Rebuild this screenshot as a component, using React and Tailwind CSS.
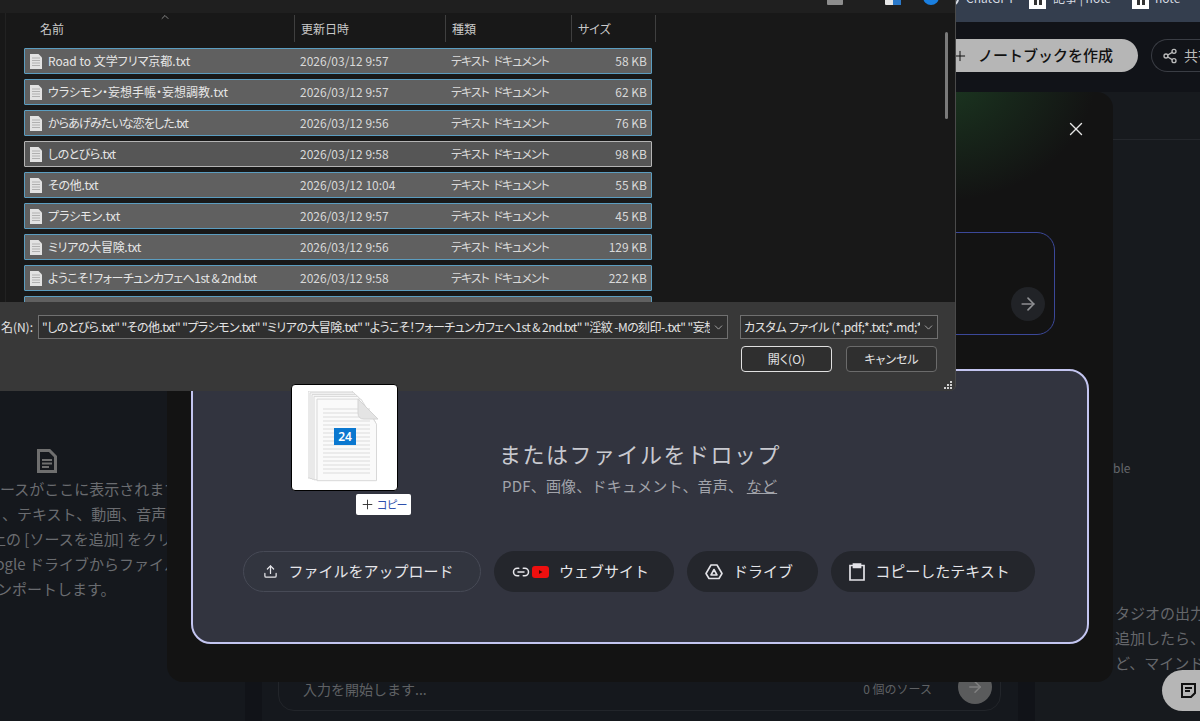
import { ArrowRight, ChevronDown, ChevronUp, Link2, Plus, Share2, Upload, X } from 'lucide-react';

const files = [
  { name: 'Road to 文学フリマ京都.txt', date: '2026/03/12 9:57', size: '58 KB' },
  { name: 'ウラシモン・妄想手帳・妄想調教.txt', date: '2026/03/12 9:57', size: '62 KB' },
  { name: 'からあげみたいな恋をした.txt', date: '2026/03/12 9:56', size: '76 KB', nameClass: 'tracking-[-0.9px]' },
  { name: 'しのとびら.txt', date: '2026/03/12 9:58', size: '98 KB', focused: true, nameClass: 'tracking-[-0.5px]' },
  { name: 'その他.txt', date: '2026/03/12 10:04', size: '55 KB', nameClass: 'tracking-[-0.3px]' },
  { name: 'プラシモン.txt', date: '2026/03/12 9:57', size: '45 KB' },
  { name: 'ミリアの大冒険.txt', date: '2026/03/12 9:56', size: '129 KB', nameClass: 'tracking-[-0.3px]' },
  { name: 'ようこそ！フォーチュンカフェへ1st & 2nd.txt', date: '2026/03/12 9:58', size: '222 KB', nameClass: 'tracking-[-0.5px]' },
  { name: '淫紋 -Mの刻印-.txt', date: '2026/03/12 9:57', size: '84 KB' },
];

function TxtIcon() {
  return (
    <svg width="12" height="15" viewBox="0 0 12 15" className="shrink-0">
      <path d="M0 0h8.5L12 3.500V15H0z" fill="#e2e2e2" />
      <path d="M2 4h8M2 6.500h8M2 9h8M2 11.500h8" stroke="#b0b0b0" strokeWidth="1" />
    </svg>
  );
}

function FileRow({ file }) {
  return (
    <div
      className={`flex items-center h-[26px] shrink-0 border rounded-[1px] text-[12px] text-[#d9d9d9] ${
        file.focused ? 'bg-[#565656] border-[#b4b4b4]' : 'bg-[#606060] border-[#5b9dc0]'
      }`}
    >
      <div className="w-[270px] flex items-center gap-[6px] pl-[5px] whitespace-nowrap text-[#e6e6e6]">
        <TxtIcon />
        <span className={file.nameClass}>{file.name}</span>
      </div>
      <div className="w-[151px] pl-[5px]">{file.date}</div>
      <div className="w-[120px] pl-[5px] whitespace-nowrap tracking-[-1px] [word-spacing:3px]">テキスト ドキュメント</div>
      <div className="flex-1 text-right pr-[4px]">{file.size}</div>
    </div>
  );
}

function ColumnHead({ label, className }) {
  return (
    <div className={`h-[27px] flex items-center border-r border-[#3f3f3f] pl-[6px] ${className}`}>{label}</div>
  );
}

function FileDialog() {
  return (
    <div className="absolute left-0 top-0 w-[956px] h-[391px] flex flex-col overflow-hidden border-r border-[#4a4a4a] rounded-br-[6px] [font-feature-settings:'palt']">
      <div className="h-[13px] shrink-0 bg-[#1f1f1f] relative overflow-hidden">
        <div className="absolute left-[827px] top-[-8px] w-[16px] h-[13px] bg-[#8d8d8d] rounded-[1px]" />
        <div className="absolute left-[885px] top-[-8px] w-[16px] h-[13px] bg-[#e6e6e6] rounded-[1px]">
          <div className="ml-auto w-[8px] h-[13px] bg-[#2a78c8]" />
        </div>
        <div className="absolute left-[923px] top-[-11px] w-[16px] h-[16px] rounded-full bg-[#1a7fe0]" />
      </div>
      <div className="flex-1 min-h-0 bg-[#181818] relative pl-[5px] overflow-hidden">
        <div className="border-l border-[#222] pl-[18px] h-full w-[650px] flex flex-col">
          <div className="relative h-[35px] shrink-0 flex items-start text-[12px] text-[#c9c9c9] pt-[2px] w-[632px]">
            <ChevronUp size={12} strokeWidth={1.5} className="absolute left-[135px] top-[-2px] text-[#aaa]" />
            <ColumnHead label="名前" className="w-[271px] pl-[16px]" />
            <ColumnHead label="更新日時" className="w-[151px]" />
            <ColumnHead label="種類" className="w-[126px]" />
            <ColumnHead label="サイズ" className="w-[84px]" />
          </div>
          <div className="flex flex-col gap-[5px] w-[628px]">
            {files.map((f) => (
              <FileRow key={f.name} file={f} />
            ))}
          </div>
        </div>
        <div className="absolute right-[7px] top-[19px] w-[3px] h-[87px] rounded-full bg-[#7a7a7a]" />
      </div>
      <div className="h-[89px] shrink-0 bg-[#383838] relative pt-[13px] text-[12px] text-[#e3e3e3]">
        <div className="flex items-center h-[24px]">
          <div className="w-[38px] shrink-0 overflow-hidden flex justify-end pr-[5px] whitespace-nowrap">名(N):</div>
          <div className="w-[690px] h-[24px] shrink-0 border border-[#707070] bg-[#2f2f2f] flex items-center pl-[3px] overflow-hidden">
            <span className="flex-1 whitespace-nowrap overflow-hidden tracking-[-0.55px]">
              "しのとびら.txt" "その他.txt" "プラシモン.txt" "ミリアの大冒険.txt" "ようこそ！フォーチュンカフェへ1st & 2nd.txt" "淫紋 -Mの刻印-.txt" "妄想手帳.txt"
            </span>
            <ChevronDown size={13} strokeWidth={1.5} className="shrink-0 mx-[2px] text-[#bbb]" />
          </div>
          <div className="w-[198px] h-[24px] ml-[12px] shrink-0 border border-[#707070] bg-[#2f2f2f] flex items-center pl-[3px] overflow-hidden">
            <span className="flex-1 whitespace-nowrap overflow-hidden tracking-[-0.3px]">カスタム ファイル (*.pdf;*.txt;*.md;*.</span>
            <ChevronDown size={13} strokeWidth={1.5} className="shrink-0 mx-[2px] text-[#bbb]" />
          </div>
        </div>
        <div className="flex justify-end gap-[14px] pr-[18px] mt-[7px]">
          <button className="w-[91px] h-[26px] rounded-[4px] border border-[#e0e0e0] bg-[#2f2f2f]">開く(O)</button>
          <button className="w-[91px] h-[26px] rounded-[4px] border border-[#6b6b6b] bg-[#2f2f2f]">キャンセル</button>
        </div>
        <svg width="9" height="9" viewBox="0 0 9 9" className="absolute right-[3px] bottom-[1px]">
          <path d="M7 0h2v2H7zM4 3h2v2H4zM7 3h2v2H7zM1 6h2v2H1zM4 6h2v2H4zM7 6h2v2H7z" fill="#d0d0d0" />
        </svg>
      </div>
    </div>
  );
}

function DragGhost() {
  return (
    <div className="absolute left-[291px] top-[384px] w-[107px] h-[107px] bg-white rounded-[4px] border border-black">
      <svg width="72" height="94" viewBox="0 0 72 94" className="absolute left-[16px] top-[6px]">
        {[0, 2, 4, 6, 9].map((o) => (
          <path
            key={o}
            d={`M${o} ${o * 0.9}h44l${20 - o * 0.5} 25v${62 - o * 0.6}h-${64 - o * 0.5}z`}
            fill="#fafafa"
            stroke="#d8d8d8"
            strokeWidth="1"
          />
        ))}
        {[18, 22, 26, 30, 34, 38, 42, 46, 50, 54, 58, 62, 66, 70, 74, 78, 82].map((y) => (
          <path key={y} d={`M15 ${y}h47`} stroke="#e6e6e6" strokeWidth="1.5" />
        ))}
        <path d="M50 8l20 20h-14q-6 0-6-6z" fill="#e4e4e4" stroke="#d4d4d4" />
      </svg>
      <div className="absolute left-[42px] top-[43px] w-[22px] h-[17px] bg-[#0b78d0] text-white text-[12px] font-semibold flex items-center justify-center font-['Noto_Sans']">
        24
      </div>
      <div className="absolute left-[64px] top-[109px] w-[55px] h-[21px] bg-white rounded-[2px] flex items-center justify-center gap-[2px] text-[11px] tracking-[-0.5px] text-[#2f50ac] whitespace-nowrap [font-feature-settings:'palt']">
        <Plus size={15} strokeWidth={1.5} className="text-[#333]" />
        コピー
      </div>
    </div>
  );
}

function DriveIcon() {
  return (
    <svg width="18" height="18" viewBox="0 0 18 18" fill="none" stroke="#e3e3e8" strokeWidth="1.6" strokeLinejoin="round">
      <path d="M6 2h6l5 8.500-3 5H4l-3-5z" />
      <path d="M9 6.500l3 5.500H6z" />
    </svg>
  );
}

function PasteIcon() {
  return (
    <svg width="16" height="18" viewBox="0 0 16 18" fill="none" stroke="#e3e3e8" strokeWidth="1.7">
      <path d="M4.500 2.500H1v14.500h14V2.500h-3.500" />
      <path d="M4.500 1h7v3.500h-7z" fill="#e3e3e8" />
    </svg>
  );
}

function Pill({ children, outlined, className }) {
  return (
    <button
      className={`h-[41px] rounded-full flex items-center justify-center gap-[10px] pr-[7px] text-[15px] font-normal text-[#e6e6ea] whitespace-nowrap ${
        outlined ? 'border border-[#474a56] bg-[#32353f]' : 'bg-[#24262c]'
      } ${className}`}
    >
      {children}
    </button>
  );
}

function DropZone() {
  return (
    <div className="mx-[24px] h-[275px] rounded-[20px] border-2 border-[#c3c5f0] bg-[#32343f] flex flex-col pl-[50px] pt-[66px]">
      <div className="pl-[256px] text-[22px] leading-[32px] text-[#c9cad0] tracking-[1.5px] whitespace-nowrap">またはファイルをドロップ</div>
      <div className="pl-[259px] mt-[6px] text-[15px] leading-[22px] tracking-[0.2px] text-[#a2a4ab] whitespace-nowrap">
        PDF、画像、ドキュメント、音声、 <span className="underline">など</span>
      </div>
      <div className="flex gap-[13px] mt-[54px]">
        <Pill outlined className="w-[238px]">
          <Upload size={15} strokeWidth={2} />
          ファイルをアップロード
        </Pill>
        <Pill className="w-[180px]">
          <span className="flex items-center gap-[2px]">
            <Link2 size={18} strokeWidth={2} />
            <svg width="17" height="12" viewBox="0 0 17 12">
              <rect width="17" height="12" rx="3" fill="#ee0f0f" />
              <path d="M7 4l3.500 2L7 8z" fill="#3a0a0a" />
            </svg>
          </span>
          ウェブサイト
        </Pill>
        <Pill className="w-[131px]">
          <DriveIcon />
          ドライブ
        </Pill>
        <Pill className="w-[204px]">
          <PasteIcon />
          コピーしたテキスト
        </Pill>
      </div>
    </div>
  );
}

function UploadModal() {
  return (
    <div className="absolute left-[167px] top-[92px] w-[946px] h-[590px] rounded-[16px] bg-[#131313] bg-[radial-gradient(ellipse_160px_130px_at_770px_-20px,#1c3a22_0%,#17261a_50%,transparent_100%)] flex flex-col">
      <div className="flex justify-end pt-[26px] pr-[26px] h-[140px] text-[#e6e6e6]">
        <X size={22} strokeWidth={1.5} />
      </div>
      <div className="ml-[100px] mr-[58px] h-[103px] rounded-[18px] border border-[#3b4899] relative">
        <div className="absolute right-[9px] bottom-[13px] w-[34px] h-[34px] rounded-full bg-[#212327] flex items-center justify-center text-[#8e8f92]">
          <ArrowRight size={20} strokeWidth={2} />
        </div>
      </div>
      <div className="h-[34px]" />
      <DropZone />
    </div>
  );
}

function NoteMark() {
  return (
    <div className="w-[17px] h-[17px] bg-white flex justify-center gap-[2px] pt-[8px]">
      <div className="w-[3px] h-[5px] bg-[#333]" />
      <div className="w-[3px] h-[5px] bg-[#333]" />
    </div>
  );
}

function Background() {
  return (
    <div className="absolute inset-0 flex flex-col bg-[#111318]">
      <div className="h-[22px] shrink-0 bg-[#343e4e] relative overflow-hidden text-[12px] text-[#d6dbe2]">
        <div className="absolute left-[945px] top-[-8px] w-[14px] h-[14px] rounded-full border-2 border-[#d6dbe2]" />
        <span className="absolute left-[966px] top-[-11px]">ChatGPT</span>
        <div className="absolute left-[1029px] top-[-8px]">
          <NoteMark />
        </div>
        <span className="absolute left-[1053px] top-[-11px] whitespace-nowrap">記事 | note</span>
        <div className="absolute left-[1132px] top-[-8px]">
          <NoteMark />
        </div>
        <span className="absolute left-[1155px] top-[-11px]">note</span>
      </div>
      <div className="h-[70px] shrink-0 flex items-start pt-[17px] justify-end gap-[13px] overflow-hidden">
        <div className="w-[200px] h-[33px] rounded-full bg-[#b6b6b6] flex items-center pl-[14px] gap-[10px] text-[15px] font-medium text-[#111] whitespace-nowrap">
          <Plus size={16} strokeWidth={1.5} />
          ノートブックを作成
        </div>
        <div className="w-[49px] h-[33px] rounded-l-full border border-r-0 border-[#3a3d44] flex items-center pl-[10px] gap-[6px] text-[14px] text-[#bbb] whitespace-nowrap overflow-hidden">
          <Share2 size={16} className="shrink-0" />
          共有
        </div>
      </div>
      <div className="flex-1 flex gap-[17px] min-h-0">
        <div className="w-[245px] shrink-0 bg-[#15181d] relative text-[15px] leading-[25px] text-[#6a6c70] overflow-hidden whitespace-nowrap">
          <svg width="20" height="24" viewBox="0 0 20 24" className="absolute left-[37px] top-[357px]">
            <path d="M1.500 1.500h11l6 6v15h-17z" fill="none" stroke="#6f6f6f" strokeWidth="3" />
            <path d="M5 11h10M5 14.500h10M5 18h7" stroke="#6f6f6f" strokeWidth="2" />
          </svg>
          <div className="absolute left-0 top-[384px]">
            <div className="ml-[-75px]">保存したソースがここに表示されます</div>
            <div className="ml-[2px]">、テキスト、動画、音声ファイル</div>
            <div className="ml-[-9px]">上の [ソースを追加] をクリックするか</div>
            <div className="ml-[-24px]">Google ドライブからファイルを</div>
            <div className="ml-[-3px]">ンポートします。</div>
          </div>
        </div>
        <div className="w-[756px] shrink-0 bg-[#15181d] relative">
          <div className="absolute left-[16px] right-[17px] bottom-[10px] h-[60px] rounded-[16px] border border-[#22252a] text-[14px] text-[#5f6164]">
            <span className="absolute left-[24px] top-[27px]">入力を開始します...</span>
            <span className="absolute right-[68px] top-[28px] text-[12px]">0 個のソース</span>
            <div className="absolute right-[8px] top-[18px] w-[34px] h-[34px] rounded-full bg-[#5a5b5c] flex items-center justify-center text-[#808080]">
              <ArrowRight size={18} />
            </div>
          </div>
        </div>
        <div className="flex-1 bg-[#171a1e] relative whitespace-nowrap text-[15px] leading-[25px] text-[#65676b]">
          <div className="absolute left-0 right-0 top-[47px] border-t border-[#24272c]" />
          <span className="absolute left-[78px] top-[363px] text-[12px]">ble</span>
          <div className="absolute left-[80px] top-[508px]">
            <div>タジオの出力</div>
            <div>追加したら、</div>
            <div>ど、マインド</div>
          </div>
        </div>
      </div>
      <div className="absolute right-0 top-[670px] w-[38px] h-[41px] rounded-l-full bg-[#b6b6b6] flex items-center pl-[19px]">
        <svg width="15" height="15" viewBox="0 0 15 15" fill="none" stroke="#111" strokeWidth="2">
          <path d="M1 1h13v9l-4 4H1z" />
          <path d="M4 5h7M4 8h5" />
        </svg>
      </div>
    </div>
  );
}

export default function App() {
  return (
    <div className="relative w-[1200px] h-[721px] overflow-hidden font-['Noto_Sans_CJK_JP',sans-serif]">
      <Background />
      <UploadModal />
      <FileDialog />
      <DragGhost />
    </div>
  );
}
